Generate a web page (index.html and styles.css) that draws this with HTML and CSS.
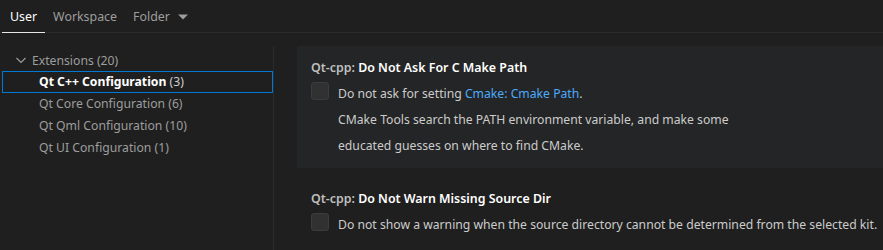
FILE: index.html
```html
<!DOCTYPE html>
<html>
<head>
<meta charset="utf-8">
<link rel="stylesheet" href="styles.css">
</head>
<body>
<div class="app">
  <div class="tabs">
    <div class="tab active">User</div>
    <div class="tab">Workspace</div>
    <div class="tab">Folder <svg class="caret" width="12" height="12" viewBox="0 0 12 12"><path d="M1 3.5 L11 3.5 L6 8.5 Z" fill="#9d9d9d"/></svg></div>
  </div>
  <div class="main">
    <div class="sidebar">
      <div class="toc-group">
        <svg class="chev" width="12" height="12" viewBox="0 0 12 12"><path d="M1.5 4 L6 8.5 L10.5 4" fill="none" stroke="#9d9d9d" stroke-width="1.1"/></svg>
        <span>Extensions <span class="count">(20)</span></span>
      </div>
      <div class="toc-item selected"><b>Qt C++ Configuration</b> <span class="count">(3)</span></div>
      <div class="toc-item">Qt Core Configuration <span class="count">(6)</span></div>
      <div class="toc-item">Qt Qml Configuration <span class="count">(10)</span></div>
      <div class="toc-item">Qt UI Configuration <span class="count">(1)</span></div>
    </div>
    <div class="divider"></div>
    <div class="content">
      <div class="setting focused">
        <div class="title"><span class="cat">Qt-cpp: </span><b>Do Not Ask For C Make Path</b></div>
        <div class="row">
          <div class="checkbox"></div>
          <div class="desc">
            <p>Do not ask for setting <span class="link">Cmake: Cmake Path</span>.</p>
            <p>CMake Tools search the PATH environment variable, and make some</p>
            <p>educated guesses on where to find CMake.</p>
          </div>
        </div>
      </div>
      <div class="setting">
        <div class="title"><span class="cat">Qt-cpp: </span><b>Do Not Warn Missing Source Dir</b></div>
        <div class="row">
          <div class="checkbox"></div>
          <div class="desc">
            <p>Do not show a warning when the source directory cannot be determined from the selected kit.</p>
          </div>
        </div>
      </div>
    </div>
  </div>
</div>
</body>
</html>
```
FILE: styles.css
```css
html, body {
  margin: 0;
  padding: 0;
  background: #1f1f1f;
  width: 883px;
  height: 250px;
  overflow: hidden;
}
.app {
  font-family: "Noto Sans", sans-serif;
  font-size: 12.2px;
  color: #cccccc;
}
.tabs {
  display: flex;
  height: 33px;
  border-bottom: 1px solid #2b2b2b;
  box-sizing: border-box;
  padding-left: 2px;
}
.tab {
  display: flex;
  align-items: center;
  padding: 0 8px;
  color: #9d9d9d;
  font-size: 12.4px;
  box-sizing: border-box;
  height: 33px;
}
.tab.active {
  color: #ffffff;
  border-bottom: 1px solid #e7e7e7;
  padding-top: 1px;
}
.caret {
  margin-left: 7px;
}
.main {
  display: flex;
  padding-top: 13px;
}
.sidebar {
  flex: none;
  width: 273px;
  padding-top: 3px;
}
.toc-group {
  display: flex;
  align-items: center;
  height: 22px;
  padding-left: 15px;
  color: #9d9d9d;
  font-size: 12.2px;
}
.chev { margin-right: 5px; }
.toc-item {
  height: 22px;
  line-height: 21px;
  font-size: 12.2px;
  color: #9d9d9d;
  box-sizing: border-box;
  margin-left: 2px;
  padding-left: 37px;
}
.toc-item.selected {
  border: 1px solid #0078d4;
  color: #ffffff;
  padding-left: 36px;
  line-height: 20px;
}
.toc-item.selected b { font-weight: 700; }
.toc-item.selected .count { color: #cccccc; }
.divider {
  flex: none;
  width: 1px;
  background: #2b2b2b;
  height: 210px;
}
.content {
  flex: 1;
  min-width: 0;
  padding-left: 23px;
}
.setting {
  padding: 12px 14px 8px 14px;
}
.setting.focused {
  background: #242526;
  padding-bottom: 9px;
}
.setting + .setting { padding-top: 21px; }
.title {
  font-size: 12.4px;
  line-height: 20px;
  color: #cccccc;
  white-space: nowrap;
}
.title .cat { color: #bfbfbf; font-weight: 600; }
.title b { color: #ffffff; font-weight: 600; }
.row {
  display: flex;
  margin-top: 4px;
}
.checkbox {
  width: 16px;
  height: 16px;
  border: 1px solid #3c3c3c;
  background: #313131;
  border-radius: 3px;
  flex: none;
  margin-right: 9px;
}
.desc {
  font-size: 12.2px;
  color: #cccccc;
  white-space: nowrap;
}
.desc p {
  margin: 0;
  line-height: 26px;
  margin-top: -1px;
}
.desc p + p { margin-top: 0; }
.link { color: #4daafc; }
```
